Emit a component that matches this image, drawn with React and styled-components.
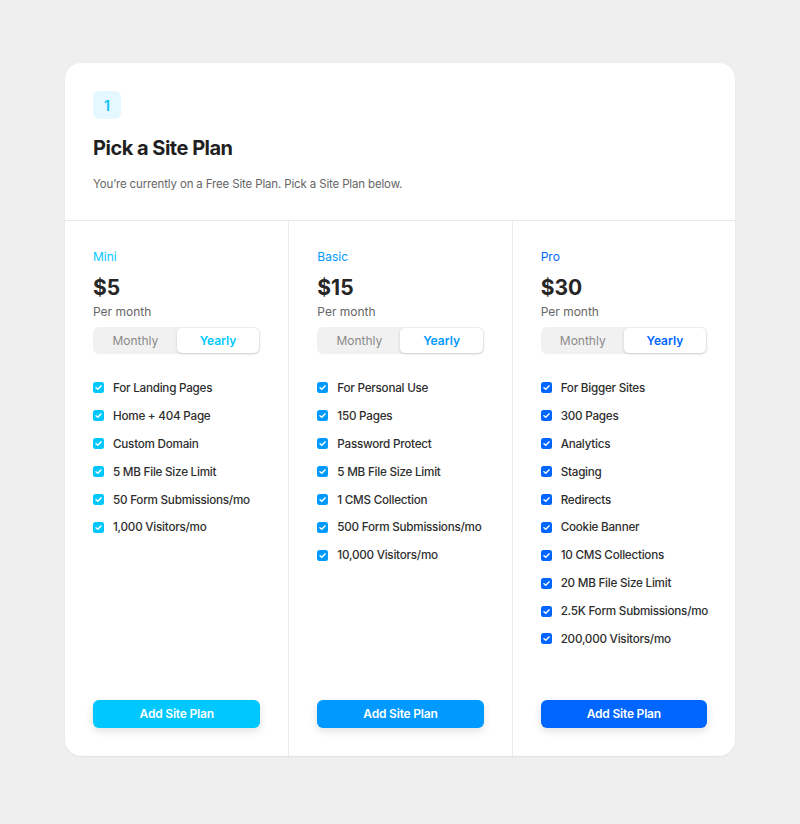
import React from 'react';
import styled, { createGlobalStyle } from 'styled-components';

const GlobalStyle = createGlobalStyle`
	html, body {
		margin: 0;
		padding: 0;
		background: #efefef;
		font-family: Inter, 'Liberation Sans', Arial, sans-serif;
		-webkit-font-smoothing: antialiased;
	}
`;

const plans = [
	{
		name: 'Mini',
		price: '$5',
		color: '#00c8ff',
		features: [
			'For Landing Pages',
			'Home + 404 Page',
			'Custom Domain',
			'5 MB File Size Limit',
			'50 Form Submissions/mo',
			'1,000 Visitors/mo',
		],
	},
	{
		name: 'Basic',
		price: '$15',
		color: '#0099ff',
		features: [
			'For Personal Use',
			'150 Pages',
			'Password Protect',
			'5 MB File Size Limit',
			'1 CMS Collection',
			'500 Form Submissions/mo',
			'10,000 Visitors/mo',
		],
	},
	{
		name: 'Pro',
		price: '$30',
		color: '#0066ff',
		features: [
			'For Bigger Sites',
			'300 Pages',
			'Analytics',
			'Staging',
			'Redirects',
			'Cookie Banner',
			'10 CMS Collections',
			'20 MB File Size Limit',
			'2.5K Form Submissions/mo',
			'200,000 Visitors/mo',
		],
	},
];

function Check({ color }) {
	return (
		<CheckBox $color={color}>
			<svg width='9' height='9' viewBox='0 0 10 10'>
				<path d='M2.2 5.2 L4.2 7 L7.8 3.2' fill='none' stroke='#fff' strokeWidth='1.6' strokeLinecap='round' strokeLinejoin='round' />
			</svg>
		</CheckBox>
	);
}

function PlanColumn({ plan }) {
	return (
		<Column>
			<PlanName $color={plan.color}>{plan.name}</PlanName>
			<Price>{plan.price}</Price>
			<Period>Per month</Period>
			<Toggle>
				<ToggleOption>Monthly</ToggleOption>
				<ToggleOption $active $color={plan.color}>Yearly</ToggleOption>
			</Toggle>
			<Features>
				{plan.features.map((f) => (
					<Feature key={f}>
						<Check color={plan.color} />
						{f}
					</Feature>
				))}
			</Features>
			<AddButton $color={plan.color}>Add Site Plan</AddButton>
		</Column>
	);
}

export default function App() {
	return (
		<>
			<GlobalStyle />
			<Page>
				<Card>
					<Header>
						<Step>1</Step>
						<Title>Pick a Site Plan</Title>
						<Subtitle>You’re currently on a Free Site Plan. Pick a Site Plan below.</Subtitle>
					</Header>
					<Plans>
						{plans.map((p) => (
							<PlanColumn key={p.name} plan={p} />
						))}
					</Plans>
				</Card>
			</Page>
		</>
	);
}

const Page = styled.div`
	min-height: 824px;
	padding: 63px 0 0 65px;
	box-sizing: border-box;
`;

const Card = styled.div`
	width: 670px;
	background: #fff;
	border-radius: 16px;
	box-shadow: 0 1px 2px rgba(0, 0, 0, 0.06);
	overflow: hidden;
`;

const Header = styled.div`
	padding: 28px 28px 28px;
	border-bottom: 1px solid #e9e9e9;
`;

const Step = styled.div`
	width: 28px;
	height: 28px;
	border-radius: 6px;
	background: #e6f8ff;
	color: #14c2f7;
	font-size: 15px;
	font-weight: 600;
	display: flex;
	align-items: center;
	justify-content: center;
`;

const Title = styled.h1`
	margin: 16px 0 0;
	font-size: 20px;
	line-height: 26px;
	font-weight: 700;
	color: #1f1f1f;
	letter-spacing: -0.5px;
`;

const Subtitle = styled.p`
	margin: 15px 0 0;
	font-size: 11.5px;
	line-height: 16px;
	color: #666;
	letter-spacing: -0.15px;
`;

const Plans = styled.div`
	display: grid;
	grid-template-columns: repeat(3, minmax(0, 1fr));
`;

const Column = styled.div`
	display: flex;
	flex-direction: column;
	padding: 28px;
	border-left: 1px solid #ececec;
	&:first-child {
		border-left: none;
	}
`;

const PlanName = styled.div`
	font-size: 12px;
	line-height: 16px;
	color: ${(p) => p.$color};
	font-weight: 400;
`;

const Price = styled.div`
	margin-top: 10px;
	font-size: 21px;
	line-height: 26px;
	font-weight: 700;
	color: #262626;
`;

const Period = styled.div`
	margin-top: 3px;
	font-size: 12px;
	line-height: 16px;
	color: #666;
`;

const Toggle = styled.div`
	margin-top: 7px;
	height: 27px;
	background: #f1f1f1;
	border-radius: 6px;
	display: grid;
	grid-template-columns: 1fr 1fr;
	padding: 1px;
	box-sizing: border-box;
`;

const ToggleOption = styled.div`
	display: flex;
	align-items: center;
	justify-content: center;
	border-radius: 5px;
	font-size: 12px;
	font-weight: ${(p) => (p.$active ? 600 : 400)};
	color: ${(p) => (p.$active ? p.$color : '#8a8a8a')};
	background: ${(p) => (p.$active ? '#fff' : 'transparent')};
	box-shadow: ${(p) => (p.$active ? '0 1px 3px rgba(0,0,0,0.16)' : 'none')};
`;

const Features = styled.ul`
	list-style: none;
	margin: 20px 0 47px;
	padding: 0;
`;

const Feature = styled.li`
	display: flex;
	align-items: center;
	height: 27.9px;
	font-size: 11.7px;
	color: #2e2e2e;
	font-weight: 500;
	letter-spacing: -0.25px;
	white-space: nowrap;
`;

const CheckBox = styled.span`
	width: 11px;
	height: 11px;
	border-radius: 2.5px;
	background: ${(p) => p.$color};
	display: inline-flex;
	align-items: center;
	justify-content: center;
	margin-right: 9px;
	flex-shrink: 0;
`;

const AddButton = styled.button`
	margin-top: auto;
	height: 28px;
	border: none;
	border-radius: 6px;
	background: ${(p) => p.$color};
	color: #fff;
	font-family: inherit;
	font-size: 12px;
	font-weight: 600;
	letter-spacing: -0.2px;
	box-shadow: 0 3px 8px rgba(0, 0, 0, 0.12);
	cursor: pointer;
`;
